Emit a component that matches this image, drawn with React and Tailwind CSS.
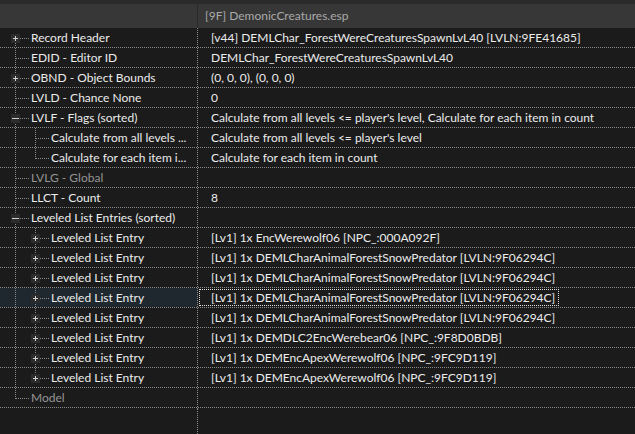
import React from "react";

const LINE = "#8a8a8a";

function Tree({ indent, box, pos }) {
  const w = indent === 1 ? 31 : 51;
  const segs = [];
  const dash = { stroke: LINE, strokeWidth: 1, strokeDasharray: "1 1", shapeRendering: "crispEdges" };
  if (indent === 1) {
    if (pos === "first") segs.push(<line key="v1" x1="15.5" y1="15" x2="15.5" y2="19" {...dash} />);
    else if (pos === "last") segs.push(<line key="v1" x1="15.5" y1="0" x2="15.5" y2="11" {...dash} />);
    else segs.push(<line key="v1" x1="15.5" y1="0" x2="15.5" y2="19" {...dash} />);
    segs.push(<line key="h1" x1={box ? 20 : 16} y1="10.5" x2="29" y2="10.5" {...dash} />);
  } else {
    segs.push(<line key="v1" x1="15.5" y1="0" x2="15.5" y2="19" {...dash} />);
    if (pos === "last") segs.push(<line key="v2" x1="35.5" y1="0" x2="35.5" y2="11" {...dash} />);
    else segs.push(<line key="v2" x1="35.5" y1="0" x2="35.5" y2="19" {...dash} />);
    segs.push(<line key="h2" x1={box ? 40 : 36} y1="10.5" x2="49" y2="10.5" {...dash} />);
  }
  const cx = indent === 1 ? 15 : 35;
  let boxEl = null;
  if (box) {
    boxEl = (
      <g shapeRendering="crispEdges">
        <rect x={cx - 4} y="6" width="9" height="9" fill="#2c2c2c" />
        <line x1={box === "-" ? cx - 3 : cx - 2} y1="10.5" x2={box === "-" ? cx + 4 : cx + 3} y2="10.5" stroke="#d0d0d0" strokeWidth="1" />
        {box === "+" && <line x1={cx + 0.5} y1="8" x2={cx + 0.5} y2="13" stroke="#d0d0d0" strokeWidth="1" />}
      </g>
    );
  }
  return (
    <svg width={w} height="19" className="shrink-0 block">
      {segs}
      {boxEl}
    </svg>
  );
}

function Row({ label, value, indent = 1, box, pos, muted, selected }) {
  return (
    <div className="flex h-5 border-b border-dotted border-[#8a8a8a]">
      <div
        className={`w-[198px] shrink-0 flex items-center border-r border-dotted border-[#8a8a8a] overflow-hidden ${
          selected ? "bg-[#1f282e]" : ""
        }`}
      >
        <Tree indent={indent} box={box} pos={pos} />
        <span className={`whitespace-nowrap ${muted ? "text-[#959595]" : "text-[#ececec]"}`}>{label}</span>
      </div>
      <div className="flex items-center pl-px min-w-0">
        <span
          className={`h-[17px] flex items-center pl-[11px] pr-[3px] border border-dotted whitespace-nowrap text-[#ececec] ${
            selected ? "border-[#e0e0e0]" : "border-transparent"
          }`}
        >
          {value}
        </span>
      </div>
    </div>
  );
}

const SNOW = "[Lv1] 1x DEMLCharAnimalForestSnowPredator [LVLN:9F06294C]";
const APEX = "[Lv1] 1x DEMEncApexWerewolf06 [NPC_:9FC9D119]";

const rows = [
  { label: "Record Header", value: "[v44] DEMLChar_ForestWereCreaturesSpawnLvL40 [LVLN:9FE41685]", box: "+", pos: "first" },
  { label: "EDID - Editor ID", value: "DEMLChar_ForestWereCreaturesSpawnLvL40" },
  { label: "OBND - Object Bounds", value: "(0, 0, 0), (0, 0, 0)", box: "+" },
  { label: "LVLD - Chance None", value: "0" },
  { label: "LVLF - Flags (sorted)", value: "Calculate from all levels <= player's level, Calculate for each item in count", box: "-" },
  { label: "Calculate from all levels ...", value: "Calculate from all levels <= player's level", indent: 2 },
  { label: "Calculate for each item i...", value: "Calculate for each item in count", indent: 2, pos: "last" },
  { label: "LVLG - Global", value: "", muted: true },
  { label: "LLCT - Count", value: "8" },
  { label: "Leveled List Entries (sorted)", value: "", box: "-" },
  { label: "Leveled List Entry", value: "[Lv1] 1x EncWerewolf06 [NPC_:000A092F]", indent: 2, box: "+" },
  { label: "Leveled List Entry", value: SNOW, indent: 2, box: "+" },
  { label: "Leveled List Entry", value: SNOW, indent: 2, box: "+" },
  { label: "Leveled List Entry", value: SNOW, indent: 2, box: "+", selected: true },
  { label: "Leveled List Entry", value: SNOW, indent: 2, box: "+" },
  { label: "Leveled List Entry", value: "[Lv1] 1x DEMDLC2EncWerebear06 [NPC_:9F8D0BDB]", indent: 2, box: "+" },
  { label: "Leveled List Entry", value: APEX, indent: 2, box: "+" },
  { label: "Leveled List Entry", value: APEX, indent: 2, box: "+", pos: "last" },
  { label: "Model", value: "", muted: true, pos: "last" },
];

export default function App() {
  return (
    <div
      className="w-[635px] h-[434px] bg-[#1b1b1b] flex flex-col overflow-hidden text-[12px] leading-[16px]"
      style={{ fontFamily: "Lato, 'Noto Sans', sans-serif" }}
    >
      <div className="h-1 bg-[#2a2a2a] shrink-0" />
      <div className="flex h-6 bg-[#373737] shrink-0">
        <div className="w-[198px] shrink-0 border-r border-[#2a2a2a]" />
        <div className="flex items-center pl-[7px] text-[#a9a9a9]">[9F] DemonicCreatures.esp</div>
      </div>
      {rows.map((r, i) => (
        <Row key={i} {...r} />
      ))}
      <div className="flex flex-1">
        <div className="w-[198px] shrink-0 border-r border-dotted border-[#8a8a8a]" />
      </div>
    </div>
  );
}
